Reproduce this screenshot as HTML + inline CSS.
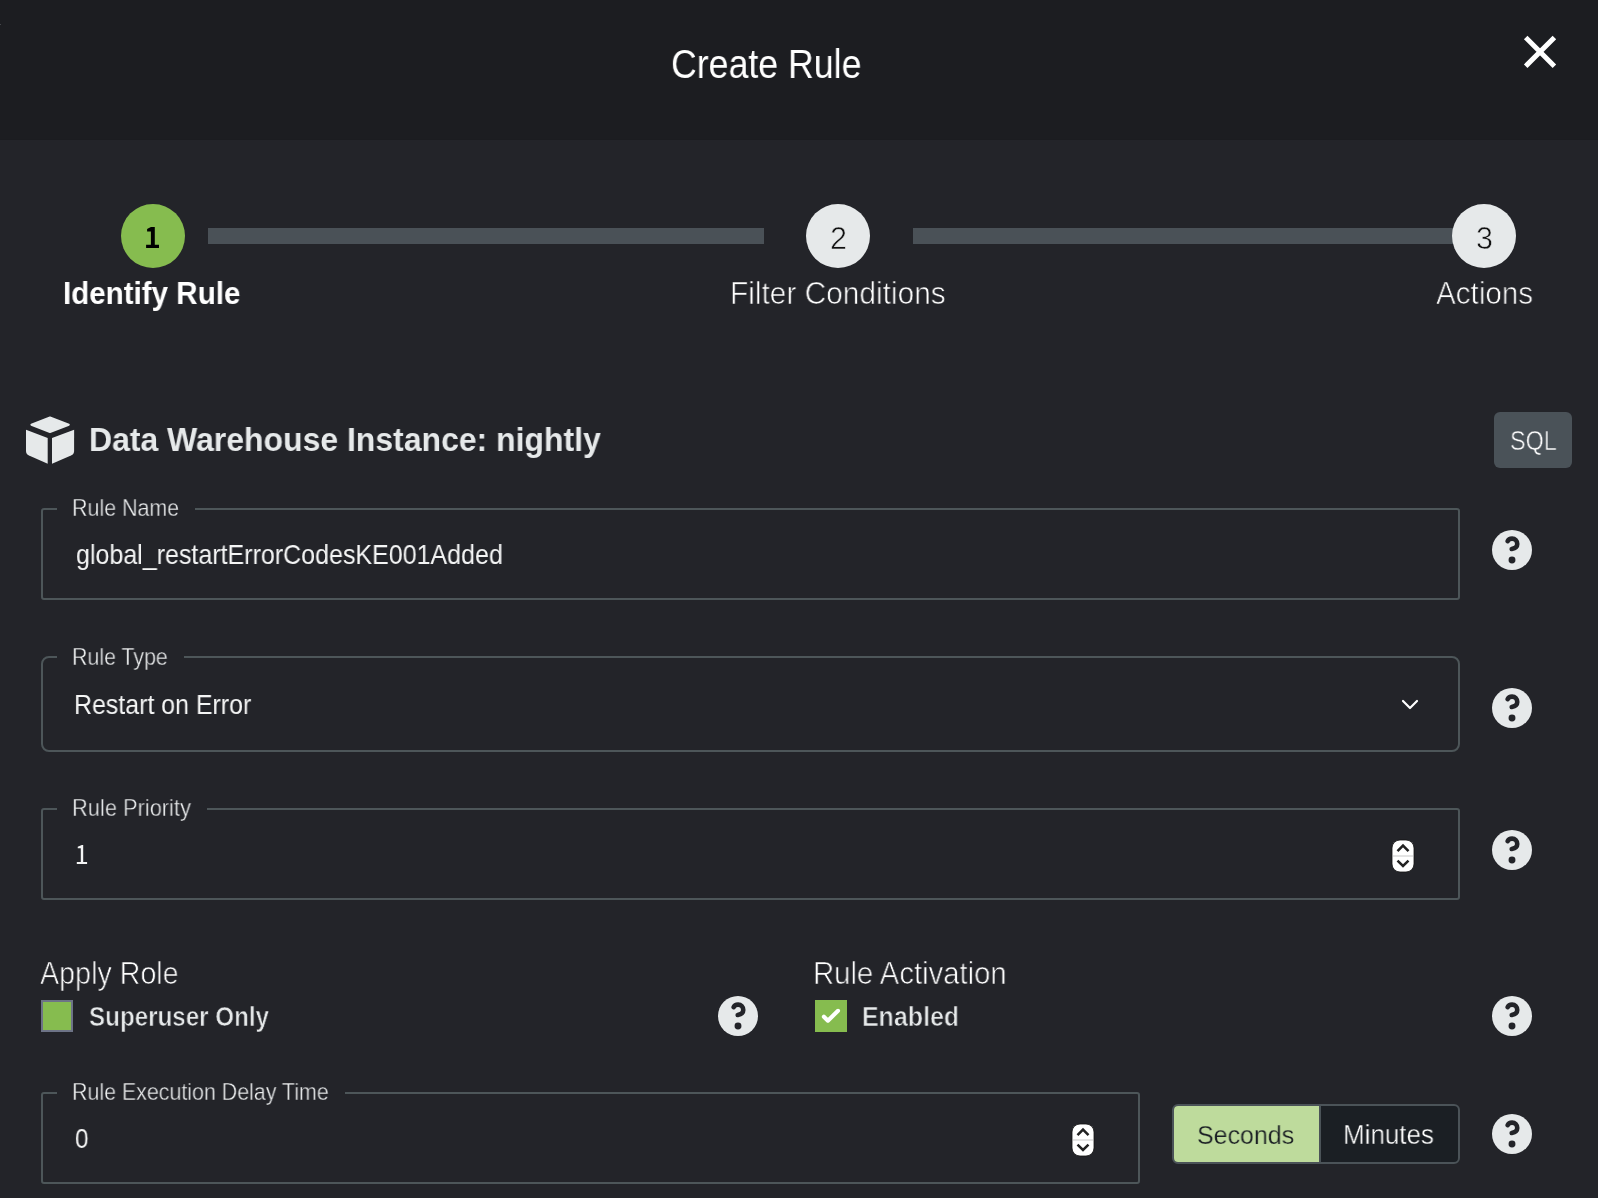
<!DOCTYPE html>
<html><head><meta charset="utf-8"><title>Create Rule</title>
<style>
html,body{margin:0;padding:0;}
body{width:1598px;height:1198px;overflow:hidden;position:relative;background:#232429;font-family:"Liberation Sans",sans-serif;}
.a{position:absolute;}
.t{position:absolute;white-space:nowrap;line-height:1;transform-origin:0 0;will-change:transform;}
.t i{display:inline-block;width:0;height:0;vertical-align:baseline;}
</style></head><body>
<div class="a" style="left:0px;top:0px;width:1598px;height:140px;background:#1c1d21;"></div>
<div class="a" style="left:0px;top:139px;width:1598px;height:1px;background:#1b1c20;"></div>
<div class="a" style="left:0px;top:24px;width:1px;height:1px;background:#44464a;"></div>
<div class="t" id="t0" style="left:670.81px;top:45.21px;font-size:40.12px;font-weight:normal;color:#fff;transform:scaleX(0.8899);">Create Rule<i></i></div>
<svg class="a" style="left:1520px;top:32px" width="40" height="40" viewBox="1520 32 40 40"><path d="M1525.7,37.5 L1554.4,66.2 M1554.4,37.5 L1525.7,66.2" stroke="#fff" stroke-width="5" fill="none"/></svg>
<div class="a" style="left:208px;top:228px;width:556px;height:16px;background:#4a5157;"></div>
<div class="a" style="left:913px;top:228px;width:557px;height:16px;background:#4a5157;"></div>
<div class="a" style="left:121px;top:204px;width:64px;height:64px;border-radius:50%;background:#86bc4f;"></div>
<div class="a" style="left:806px;top:204px;width:64px;height:64px;border-radius:50%;background:#e6e9ea;"></div>
<div class="a" style="left:1452px;top:204px;width:64px;height:64px;border-radius:50%;background:#e6e9ea;"></div>
<div class="t" id="t1" style="left:143.95px;top:222.01px;font-size:30.52px;font-weight:bold;color:#000;transform:scaleX(0.9209);visibility:hidden;">1<i></i></div>
<svg class="a" style="left:140px;top:220px" width="30" height="34" viewBox="140 220 30 34"><path d="M150.9,227.1 L154.8,227.1 L154.8,244.8 L159.0,244.8 L159.0,248.0 L146.1,248.0 L146.1,244.8 L150.9,244.8 L150.9,231.6 L147.1,231.6 L147.1,228.9 Q149,228.4 150.9,227.1 Z" fill="#000"/></svg>
<div class="t" id="t2" style="left:829.73px;top:222.51px;font-size:30.52px;font-weight:normal;color:#111;transform:scaleX(0.9816);-webkit-text-stroke:0.6px #e6e9ea;">2<i></i></div>
<div class="t" id="t3" style="left:1475.75px;top:222.51px;font-size:30.52px;font-weight:normal;color:#111;transform:scaleX(0.9797);-webkit-text-stroke:0.6px #e6e9ea;">3<i></i></div>
<div class="t" id="t4" style="left:62.75px;top:278.00px;font-size:31.54px;font-weight:bold;color:#fff;transform:scaleX(0.9373);">Identify Rule<i></i></div>
<div class="t" id="t5" style="left:729.60px;top:277.01px;font-size:31.98px;font-weight:normal;color:#fff;transform:scaleX(0.9337);-webkit-text-stroke:0.7px #232429;">Filter Conditions<i></i></div>
<div class="t" id="t6" style="left:1435.52px;top:277.01px;font-size:31.98px;font-weight:normal;color:#fff;transform:scaleX(0.9266);-webkit-text-stroke:0.7px #232429;">Actions<i></i></div>
<svg class="a" style="left:20px;top:410px" width="60" height="60" viewBox="20 410 60 60"><path d="M31.4,424.7 L50.0,417.4 L68.8,424.7 L50.0,432.1 Z" fill="#e6e9ea" stroke="#e6e9ea" stroke-width="2" stroke-linejoin="round"/><path d="M26,429.7 L47.7,438 L47.7,463.8 L29,455.5 Q26,454 26,451 Z" fill="#e6e9ea"/><path d="M52,438 L74.1,429.7 L74.1,451 Q74.1,454 71,455.5 L52,463.8 Z" fill="#e6e9ea"/></svg>
<div class="t" id="t7" style="left:88.98px;top:423.30px;font-size:33.87px;font-weight:bold;color:#e6e9ea;transform:scaleX(0.9434);">Data Warehouse Instance: nightly<i></i></div>
<div class="a" style="left:1494px;top:412px;width:78px;height:56px;background:#4a5258;border-radius:6px;"></div>
<div class="t" id="t8" style="left:1509.62px;top:426.60px;font-size:27.62px;font-weight:normal;color:#fff;transform:scaleX(0.8453);-webkit-text-stroke:0.5px #4a5258;">SQL<i></i></div>
<div class="a" style="left:41px;top:508px;width:1419px;height:92px;box-sizing:border-box;border:2px solid #4d5659;border-radius:3px;"></div>
<div class="a" style="left:57px;top:507px;width:138px;height:4px;background:#232429;"></div>
<div class="t" id="t9" style="left:71.93px;top:496.72px;font-size:23.26px;font-weight:normal;color:#eaeced;transform:scaleX(0.9217);-webkit-text-stroke:0.35px #232429;">Rule Name<i></i></div>
<div class="t" id="t10" style="left:75.56px;top:540.71px;font-size:27.33px;font-weight:normal;color:#f4f5f5;transform:scaleX(0.9152);">global_restartErrorCodesKE001Added<i></i></div>
<svg class="a" style="left:1492px;top:530px" width="40" height="40" viewBox="-20 -20 40 40"><circle cx="0" cy="0" r="20" fill="#e6e9ea"/><path d="M-4.4,-8.8 C-3.6,-10.6 -1.9,-11.4 0.1,-11.4 C3.0,-11.4 5.25,-9.0 5.25,-6.0 C5.25,-3.0 2.6,-1.6 -0.3,-1.0" fill="none" stroke="#232429" stroke-width="4.6" stroke-linecap="round" stroke-linejoin="round"/><circle cx="0" cy="10.0" r="3.45" fill="#232429"/></svg>
<div class="a" style="left:41px;top:656px;width:1419px;height:96px;box-sizing:border-box;border:2px solid #4d5659;border-radius:8px;"></div>
<div class="a" style="left:57px;top:655px;width:127px;height:4px;background:#232429;"></div>
<div class="t" id="t11" style="left:72.13px;top:645.50px;font-size:23.26px;font-weight:normal;color:#eaeced;transform:scaleX(0.9183);-webkit-text-stroke:0.35px #232429;">Rule Type<i></i></div>
<div class="t" id="t12" style="left:73.50px;top:691.60px;font-size:26.89px;font-weight:normal;color:#f4f5f5;transform:scaleX(0.9274);">Restart on Error<i></i></div>
<svg class="a" style="left:1398px;top:694px" width="24" height="20" viewBox="1398 694 24 20"><path d="M1403,701 L1410,708 L1417,701" fill="none" stroke="#fff" stroke-width="2.2" stroke-linecap="round" stroke-linejoin="round"/></svg>
<svg class="a" style="left:1492px;top:688px" width="40" height="40" viewBox="-20 -20 40 40"><circle cx="0" cy="0" r="20" fill="#e6e9ea"/><path d="M-4.4,-8.8 C-3.6,-10.6 -1.9,-11.4 0.1,-11.4 C3.0,-11.4 5.25,-9.0 5.25,-6.0 C5.25,-3.0 2.6,-1.6 -0.3,-1.0" fill="none" stroke="#232429" stroke-width="4.6" stroke-linecap="round" stroke-linejoin="round"/><circle cx="0" cy="10.0" r="3.45" fill="#232429"/></svg>
<div class="a" style="left:41px;top:808px;width:1419px;height:92px;box-sizing:border-box;border:2px solid #4d5659;border-radius:3px;"></div>
<div class="a" style="left:57px;top:807px;width:150px;height:4px;background:#232429;"></div>
<div class="t" id="t13" style="left:71.73px;top:797.32px;font-size:23.26px;font-weight:normal;color:#eaeced;transform:scaleX(0.9396);-webkit-text-stroke:0.35px #232429;">Rule Priority<i></i></div>
<div class="t" id="t14" style="left:74.62px;top:841.01px;font-size:27.62px;font-weight:normal;color:#f4f5f5;transform:scaleX(0.8695);visibility:hidden;">1<i></i></div>
<svg class="a" style="left:70px;top:838px" width="24" height="32" viewBox="70 838 24 32"><path d="M77.75,846.8 L81.8,845.1 L83.2,845.1 L83.2,861.9 L87.1,861.9 L87.1,864.06 L76.8,864.06 L76.8,861.9 L80.8,861.9 L80.8,848.3 L77.75,848.3 Z" fill="#f4f5f5"/></svg>
<svg class="a" style="left:1391px;top:839px" width="24" height="34" viewBox="-1 -1 24 34"><rect x="0" y="0" width="22" height="32" rx="8" ry="8" fill="#fff" stroke="#111" stroke-width="0.8"/><line x1="1" y1="16" x2="21" y2="16" stroke="#d0d0d0" stroke-width="1.2"/><path d="M5.5,11.2 L11,5.6 L16.5,11.2" fill="none" stroke="#222" stroke-width="2.5"/><path d="M5.5,20.6 L11,26.0 L16.5,20.6" fill="none" stroke="#222" stroke-width="2.5"/></svg>
<svg class="a" style="left:1492px;top:830px" width="40" height="40" viewBox="-20 -20 40 40"><circle cx="0" cy="0" r="20" fill="#e6e9ea"/><path d="M-4.4,-8.8 C-3.6,-10.6 -1.9,-11.4 0.1,-11.4 C3.0,-11.4 5.25,-9.0 5.25,-6.0 C5.25,-3.0 2.6,-1.6 -0.3,-1.0" fill="none" stroke="#232429" stroke-width="4.6" stroke-linecap="round" stroke-linejoin="round"/><circle cx="0" cy="10.0" r="3.45" fill="#232429"/></svg>
<div class="t" id="t15" style="left:39.75px;top:957.21px;font-size:31.98px;font-weight:normal;color:#fff;transform:scaleX(0.8967);-webkit-text-stroke:0.7px #232429;">Apply Role<i></i></div>
<div class="a" style="left:41px;top:1000px;width:32px;height:32px;box-sizing:border-box;border:2px solid #6d7386;background:#86bc4f;"></div>
<div class="t" id="t16" style="left:89.02px;top:1001.71px;font-size:28.49px;font-weight:bold;color:#e6e9ea;transform:scaleX(0.8487);-webkit-text-stroke:0.6px #232429;">Superuser Only<i></i></div>
<svg class="a" style="left:718px;top:996px" width="40" height="40" viewBox="-20 -20 40 40"><circle cx="0" cy="0" r="20" fill="#e6e9ea"/><path d="M-4.4,-8.8 C-3.6,-10.6 -1.9,-11.4 0.1,-11.4 C3.0,-11.4 5.25,-9.0 5.25,-6.0 C5.25,-3.0 2.6,-1.6 -0.3,-1.0" fill="none" stroke="#232429" stroke-width="4.6" stroke-linecap="round" stroke-linejoin="round"/><circle cx="0" cy="10.0" r="3.45" fill="#232429"/></svg>
<div class="t" id="t17" style="left:813.09px;top:958.00px;font-size:31.54px;font-weight:normal;color:#fff;transform:scaleX(0.9285);-webkit-text-stroke:0.7px #232429;">Rule Activation<i></i></div>
<div class="a" style="left:815px;top:1000px;width:32px;height:32px;background:#86bc4f;"></div>
<svg class="a" style="left:815px;top:1000px" width="32" height="32" viewBox="815 1000 32 32"><path d="M823.9,1016.7 L827.9,1020.7 L838,1010.8" fill="none" stroke="#fff" stroke-width="4.1" stroke-linecap="round" stroke-linejoin="round"/></svg>
<div class="t" id="t18" style="left:862.25px;top:1002.71px;font-size:27.18px;font-weight:bold;color:#e6e9ea;transform:scaleX(0.9191);-webkit-text-stroke:0.6px #232429;">Enabled<i></i></div>
<svg class="a" style="left:1492px;top:996px" width="40" height="40" viewBox="-20 -20 40 40"><circle cx="0" cy="0" r="20" fill="#e6e9ea"/><path d="M-4.4,-8.8 C-3.6,-10.6 -1.9,-11.4 0.1,-11.4 C3.0,-11.4 5.25,-9.0 5.25,-6.0 C5.25,-3.0 2.6,-1.6 -0.3,-1.0" fill="none" stroke="#232429" stroke-width="4.6" stroke-linecap="round" stroke-linejoin="round"/><circle cx="0" cy="10.0" r="3.45" fill="#232429"/></svg>
<div class="a" style="left:41px;top:1092px;width:1099px;height:92px;box-sizing:border-box;border:2px solid #4d5659;border-radius:3px;"></div>
<div class="a" style="left:57px;top:1091px;width:288px;height:4px;background:#232429;"></div>
<div class="t" id="t19" style="left:71.96px;top:1081.00px;font-size:23.26px;font-weight:normal;color:#eaeced;transform:scaleX(0.9196);-webkit-text-stroke:0.35px #232429;">Rule Execution Delay Time<i></i></div>
<div class="t" id="t20" style="left:74.64px;top:1125.00px;font-size:27.47px;font-weight:normal;color:#f4f5f5;transform:scaleX(0.8805);">0<i></i></div>
<svg class="a" style="left:1071px;top:1123px" width="24" height="34" viewBox="-1 -1 24 34"><rect x="0" y="0" width="22" height="32" rx="8" ry="8" fill="#fff" stroke="#111" stroke-width="0.8"/><line x1="1" y1="16" x2="21" y2="16" stroke="#d0d0d0" stroke-width="1.2"/><path d="M5.5,11.2 L11,5.6 L16.5,11.2" fill="none" stroke="#222" stroke-width="2.5"/><path d="M5.5,20.6 L11,26.0 L16.5,20.6" fill="none" stroke="#222" stroke-width="2.5"/></svg>
<div class="a" style="left:1172px;top:1104px;width:288px;height:60px;box-sizing:border-box;border:2px solid #4b5358;border-radius:6px;background:#1b1f24;overflow:hidden;"></div>
<div class="a" style="left:1174px;top:1106px;width:145px;height:56px;background:#bedb9c;border-radius:4px 0 0 4px;"></div>
<div class="a" style="left:1319px;top:1106px;width:2px;height:56px;background:#4b5358;"></div>
<div class="t" id="t21" style="left:1197.25px;top:1121.81px;font-size:26.31px;font-weight:normal;color:#1b1f24;transform:scaleX(0.9492);-webkit-text-stroke:0.25px #bedb9c;">Seconds<i></i></div>
<div class="t" id="t22" style="left:1342.88px;top:1121.01px;font-size:27.62px;font-weight:normal;color:#fff;transform:scaleX(0.9412);-webkit-text-stroke:0.4px #1b1f24;">Minutes<i></i></div>
<svg class="a" style="left:1492px;top:1114px" width="40" height="40" viewBox="-20 -20 40 40"><circle cx="0" cy="0" r="20" fill="#e6e9ea"/><path d="M-4.4,-8.8 C-3.6,-10.6 -1.9,-11.4 0.1,-11.4 C3.0,-11.4 5.25,-9.0 5.25,-6.0 C5.25,-3.0 2.6,-1.6 -0.3,-1.0" fill="none" stroke="#232429" stroke-width="4.6" stroke-linecap="round" stroke-linejoin="round"/><circle cx="0" cy="10.0" r="3.45" fill="#232429"/></svg>
</body></html>
